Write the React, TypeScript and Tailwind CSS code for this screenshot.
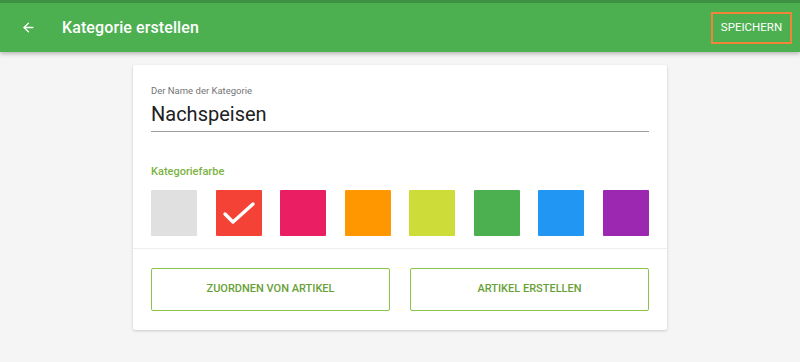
import { ArrowLeft } from "lucide-react";

const colors = [
  "#E0E0E0",
  "#F44336",
  "#E91E63",
  "#FF9800",
  "#CDDC39",
  "#4CAF50",
  "#2196F3",
  "#9C27B0",
];

const selected = 1;

export default function App() {
  return (
    <div
      className="w-[800px] h-[362px] bg-[#F5F5F5] overflow-hidden"
      style={{ fontFamily: "Roboto, 'Noto Sans', sans-serif" }}
    >
      <header className="h-[52px] bg-[#4CAF50] border-t-[3px] border-[#3E9142] flex items-center justify-between pl-[21px] pr-[8px] shadow-[0_2px_4px_rgba(0,0,0,0.25)] relative z-10">
        <div className="flex items-center">
          <ArrowLeft size={15} strokeWidth={2.2} className="text-white" />
          <h1 className="ml-[26px] text-white text-[16px] font-medium tracking-[0.1px]">
            Kategorie erstellen
          </h1>
        </div>
        <button className="h-[32px] w-[81px] border-2 border-[#F0853A] text-white text-[11.5px] font-normal">
          SPEICHERN
        </button>
      </header>

      <main className="flex justify-center pt-[13px]">
        <div className="w-[534px] h-[265px] bg-white rounded-[2px] shadow-[0_1px_3px_rgba(0,0,0,0.18)]">
          <div className="px-[18px] pt-[20px]">
            <label className="block text-[9.5px] text-[#757575] leading-[12px]">
              Der Name der Kategorie
            </label>
            <div className="mt-[4px] text-[20px] text-[#212121] leading-[26px]">
              Nachspeisen
            </div>
            <div className="mt-[4px] h-px bg-[#9E9E9E]" />

            <div className="mt-[33px] text-[11px] font-medium text-[#7CB342] leading-[14px]">
              Kategoriefarbe
            </div>
            <div className="mt-[11px] flex justify-between">
              {colors.map((c, i) => (
                <div
                  key={c}
                  className="w-[46px] h-[46px] rounded-[1px] flex items-center justify-center"
                  style={{ backgroundColor: c }}
                >
                  {i === selected && (
                    <svg width="34" height="24" viewBox="0 0 34 24">
                      <path
                        d="M3 13 L11 21 L31 3"
                        fill="none"
                        stroke="white"
                        strokeWidth="3.4"
                        strokeLinecap="round"
                        strokeLinejoin="round"
                      />
                    </svg>
                  )}
                </div>
              ))}
            </div>
          </div>

          <div className="mt-[12px] h-px bg-[#EEEEEE]" />

          <div className="px-[18px] pt-[19px] grid grid-cols-2 gap-[20px]">
            <button className="h-[43px] border border-[#8BC34A] rounded-[2px] text-[11px] font-medium text-[#689F38]">
              ZUORDNEN VON ARTIKEL
            </button>
            <button className="h-[43px] border border-[#8BC34A] rounded-[2px] text-[11px] font-medium text-[#689F38]">
              ARTIKEL ERSTELLEN
            </button>
          </div>
        </div>
      </main>
    </div>
  );
}
